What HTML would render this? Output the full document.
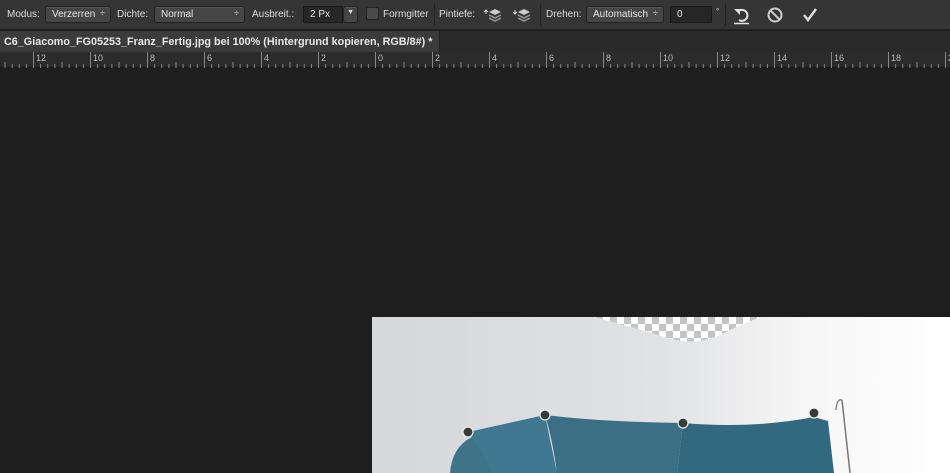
<!DOCTYPE html>
<html><head><meta charset="utf-8"><style>
*{margin:0;padding:0;box-sizing:border-box}
body{width:950px;height:473px;overflow:hidden;background:#1e1e1e;font-family:"Liberation Sans",sans-serif;position:relative}
.tb{position:absolute;left:0;top:0;width:950px;height:30px;background:#353535;border-bottom:1px solid #222;color:#ddd;font-size:10px}
.tb span{position:absolute;top:9px;white-space:nowrap}
.sel{position:absolute;top:6px;height:17px;background:#454545;border:1px solid #222;border-radius:3px;color:#e6e6e6;font-size:10px;padding:2px 0 0 6px;box-shadow:inset 0 1px 0 #555}
.sel b{position:absolute;right:5px;top:1px;font-weight:normal;font-size:9px}
.inp{position:absolute;top:6px;height:17px;background:#262626;border:1px solid #1a1a1a;color:#e6e6e6;font-size:10px;padding:2px 0 0 6px}
.sep{position:absolute;top:4px;width:1px;height:22px;background:#232323}
.tabs{position:absolute;left:0;top:31px;width:950px;height:21px;background:#2a2a2a}
.tab{position:absolute;left:0;top:0;width:440px;height:21px;background:#3b3b3b;color:#e8e8e8;font-size:10.8px;font-weight:bold;padding:5px 0 0 4px;white-space:nowrap;border-right:1px solid #222;overflow:hidden}
.ruler{position:absolute;left:0;top:52px;width:950px;height:16px;background:#2b2b2b;border-bottom:1px solid #181818}
.ruler span{position:absolute;top:1px;font-size:9px;color:#bbb}
</style></head><body>
<div class="tb">
<span style="left:7px">Modus:</span>
<div class="sel" style="left:45px;width:66px">Verzerren<b>÷</b></div>
<span style="left:117px">Dichte:</span>
<div class="sel" style="left:154px;width:91px">Normal<b>÷</b></div>
<span style="left:252px">Ausbreit.:</span>
<div class="inp" style="left:303px;width:40px">2 Px</div>
<div class="sel" style="left:343px;width:15px;padding:0"><b style="right:3px;top:2px;font-size:7px">▼</b></div>
<div style="position:absolute;left:366px;top:7px;width:13px;height:13px;background:#4a4a4a;border:1px solid #222;border-radius:2px"></div>
<span style="left:383px">Formgitter</span>
<div class="sep" style="left:434px"></div>
<span style="left:439px">Pintiefe:</span>
<svg style="position:absolute;left:483px;top:5px" width="20" height="20"><path d="M3 9v-4M1 7l2-2 2 2" stroke="#ddd" stroke-width="1" fill="none"/><path d="M12 4l6 3-6 3-6-3z" fill="#ccc"/><path d="M6 10l6 3 6-3M6 13l6 3 6-3" stroke="#999" stroke-width="1.5" fill="none"/></svg>
<svg style="position:absolute;left:512px;top:5px" width="20" height="20"><path d="M3 5v4M1 7l2 2 2-2" stroke="#ddd" stroke-width="1" fill="none"/><path d="M12 4l6 3-6 3-6-3z" fill="#ccc"/><path d="M6 10l6 3 6-3M6 13l6 3 6-3" stroke="#999" stroke-width="1.5" fill="none"/></svg>
<div class="sep" style="left:540px"></div>
<span style="left:546px">Drehen:</span>
<div class="sel" style="left:586px;width:78px">Automatisch<b>÷</b></div>
<div class="inp" style="left:670px;width:42px">0</div>
<span style="left:716px;top:7px;font-size:8px">°</span>
<div class="sep" style="left:725px"></div>
<svg style="position:absolute;left:731px;top:4px" width="22" height="22"><path d="M7 7.5A5.5 5.5 0 1 1 8 16" stroke="#e0e0e0" stroke-width="2" fill="none"/><path d="M3 5h6v6z" fill="#e0e0e0"/><path d="M3 19.5h15" stroke="#e0e0e0" stroke-width="1.5"/></svg>
<svg style="position:absolute;left:766px;top:6px" width="18" height="18"><circle cx="9" cy="9" r="6.5" stroke="#ccc" stroke-width="2" fill="none"/><path d="M4.5 4.5l9 9" stroke="#ccc" stroke-width="2"/></svg>
<svg style="position:absolute;left:801px;top:6px" width="18" height="18"><path d="M3 9l4 5 8-11" stroke="#ddd" stroke-width="2.4" fill="none"/></svg>
</div>
<div class="tabs"><div class="tab">C6_Giacomo_FG05253_Franz_Fertig.jpg bei 100% (Hintergrund kopieren, RGB/8#) *</div></div>
<div class="ruler" id="r">
<svg width="950" height="16" style="position:absolute;left:0;top:0" id="rs"></svg>
</div>
<svg style="position:absolute;left:372px;top:317px" width="578" height="156">
<defs>
<linearGradient id="wall" x1="0" x2="1" y1="0" y2="0"><stop offset="0" stop-color="#d6d7da"/><stop offset="0.5" stop-color="#e1e2e4"/><stop offset="0.75" stop-color="#f6f6f6"/><stop offset="1" stop-color="#ffffff"/></linearGradient>
<pattern id="chk" width="14" height="14" patternUnits="userSpaceOnUse"><rect width="14" height="14" fill="#fff"/><rect width="7" height="7" fill="#c4c4c4"/><rect x="7" y="7" width="7" height="7" fill="#c4c4c4"/></pattern>
</defs>
<rect width="578" height="156" fill="url(#wall)"/>
<path d="M222 0 Q260 10 300 22 Q330 30 360 12 L388 0z" fill="url(#chk)"/>
<path d="M78 156 Q80 130 100 120 L130 118 L190 156z" fill="#3e7388"/>
<path d="M96 115 L173 98 L185 156 L120 156 Q110 135 96 115z" fill="#3f7890"/>
<path d="M173 98 Q230 105 311 106 L305 156 L185 156 Q180 120 173 98z" fill="#3a6f86"/>
<path d="M311 106 Q380 112 442 100 L456 104 L462 156 L305 156z" fill="#336980"/>
<path d="M470 83 q-5 -2 -6 10" stroke="#888" stroke-width="1.5" fill="none"/>
<path d="M470 83 L478 156" stroke="#777" stroke-width="1.5"/>
<g fill="#3a3a3a" stroke="#eee" stroke-width="1.2">
<circle cx="96" cy="115" r="5"/><circle cx="173" cy="98" r="5"/><circle cx="311" cy="106" r="5"/><circle cx="442" cy="96" r="5"/>
</g>
</svg>
<script>
var s='',h='';
for(var x=375-57*7;x<960;x+=7.125){var i=Math.round((x-375)/7.125);var big=i%8==0;
s+='<line x1="'+(x+0.5)+'" x2="'+(x+0.5)+'" y1="'+(big?0:(i%4==0?10:12))+'" y2="16" stroke="#888" stroke-width="1"/>';
if(big){var n=Math.abs(i/4);h+='<span style="left:'+(x+3)+'px">'+n+'</span>';}}
document.getElementById('rs').innerHTML=s;
document.getElementById('r').insertAdjacentHTML('beforeend',h);
</script>
</body></html>
